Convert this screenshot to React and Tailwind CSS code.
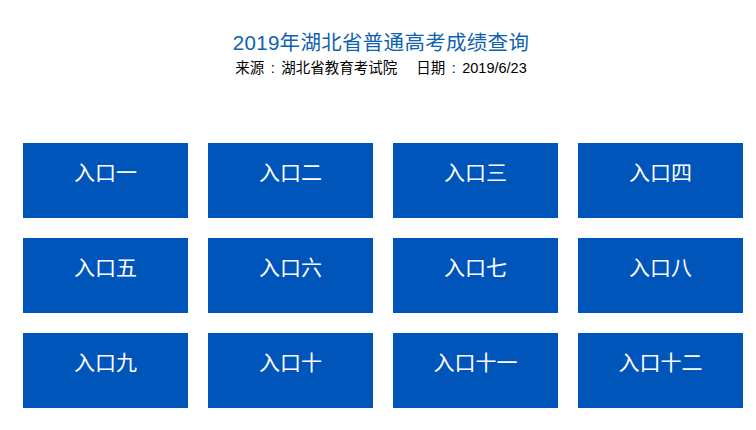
const entries = [
  '入口一', '入口二', '入口三', '入口四',
  '入口五', '入口六', '入口七', '入口八',
  '入口九', '入口十', '入口十一', '入口十二',
];

// full-width style colon, centred in its own cell
const Colon = () => <span className="inline-block w-[17px] text-center">:</span>;

export default function App() {
  return (
    <div
      className="w-[756px] h-[430px] bg-white overflow-hidden"
      style={{ fontFamily: '"Liberation Sans", "Noto Sans CJK SC", sans-serif' }}
    >
      <div className="pt-[30px] text-center">
        <h1 className="text-[20.5px] leading-[26px] text-[#0f62b0] pl-[6px] tracking-[0.3px]">2019年湖北省普通高考成绩查询</h1>
        <p className="mt-[3px] text-[14.5px] leading-[18px] h-[18px] text-black pl-[6px]">
          来源<Colon />湖北省教育考试院<span className="ml-[19px]">日期</span><Colon />2019/6/23
        </p>
      </div>
      <div className="mt-[66px] pl-[23px] grid grid-cols-[repeat(4,165px)] gap-x-[20px] gap-y-[20px]">
        {entries.map((label) => (
          <a
            key={label}
            href="#"
            className="h-[75px] bg-[#0055bb] text-white text-[21px] flex justify-center pt-[16px] leading-[28px]"
          >
            {label}
          </a>
        ))}
      </div>
    </div>
  );
}
